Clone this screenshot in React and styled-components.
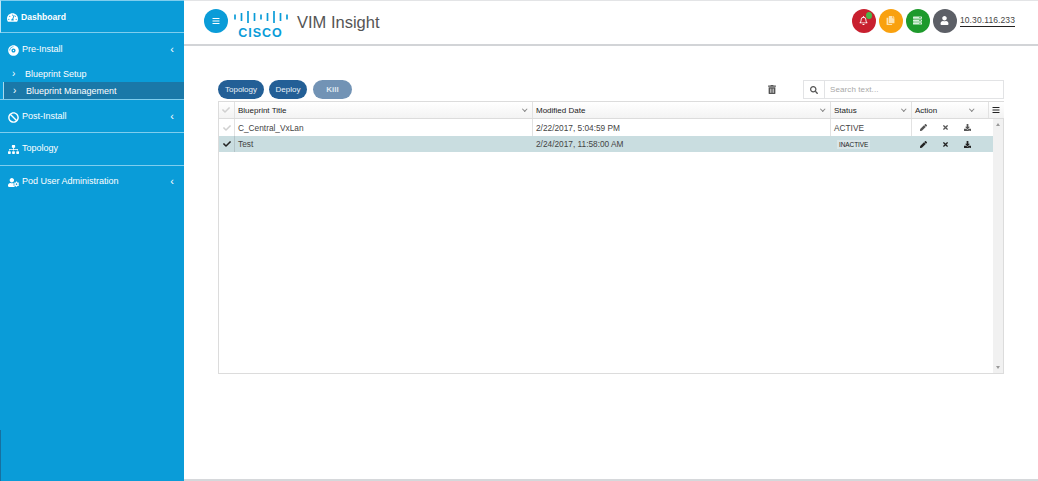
import React from "react";
import styled, { createGlobalStyle } from "styled-components";
import {
  FaRegBell,
  FaCheck,
  FaTimes,
  FaPen,
  FaDownload,
  FaUser,
  FaTrashAlt,
  FaSearch,
  FaBars,
  FaSitemap,
  FaTachometerAlt,
  FaCopy,
  FaServer,
  FaBan,
  FaUserCog,
  FaCompactDisc,
} from "react-icons/fa";

const GlobalStyle = createGlobalStyle`
  html, body {
    margin: 0;
    padding: 0;
    background: #fff;
    overflow: hidden;
  }
  * { box-sizing: border-box; }
  body {
    font-family: "Liberation Sans", Arial, sans-serif;
    color: #444;
  }
`;

const Page = styled.div`
  display: flex;
  width: 1038px;
  height: 481px;
  border-bottom: 2px solid #d6d8db;
`;

const Sidebar = styled.nav`
  position: relative;
  width: 184px;
  flex: none;
  background: #0a9cd8;
  margin-bottom: -2px;
  height: 481px;
  color: #fff;
  font-size: 9px;

  &::before {
    content: "";
    position: absolute;
    left: 0;
    top: 430px;
    bottom: 0;
    width: 1px;
    background: #17709f;
  }
`;

const Section = styled.div`
  height: ${(p) => p.$h}px;
  border-bottom: 1px solid #7fcdee;
  padding-left: 1px;
`;

const DashboardSection = styled(Section)`
  border-top: 1px solid #7fcdee;
  border-left: 1px solid #bfe5f5;
  padding-left: 6px;
`;

const SectionHead = styled.div`
  display: flex;
  align-items: center;
  height: ${(p) => p.$h}px;
  padding: 0 10px ${(p) => (p.$lift ? 2 : 0)}px ${(p) => p.$left ?? 7}px;
  font-weight: ${(p) => (p.$bold ? 700 : 400)};
  font-size: ${(p) => (p.$bold ? 8.6 : 9)}px;

  svg {
    flex: none;
    width: 11px;
    height: 11px;
    margin: 2px 3px 0 0;
  }
`;

const Caret = styled.span`
  margin-left: auto;
  font-size: 11px;
  line-height: 1;
`;

const SubItem = styled.div`
  display: flex;
  align-items: center;
  height: 17px;
  padding-left: ${(p) => (p.$active ? 9 : 11)}px;
  margin-left: ${(p) => (p.$active ? 2 : 0)}px;
  background: ${(p) => (p.$active ? "#1a78a8" : "transparent")};
  border-left: ${(p) => (p.$active ? "1px solid #a9d9ee" : "none")};
  font-size: 9px;
`;

const SubCaret = styled.span`
  width: 13px;
  font-size: 10px;
`;

const Main = styled.main`
  flex: 1;
  min-width: 0;
`;

const Header = styled.header`
  display: flex;
  align-items: center;
  height: 46px;
  padding: 0 23px 4px 20px;
  border-top: 1px solid #e3e4e6;
  border-bottom: 2px solid #d2d4d7;
`;

const MenuButton = styled.div`
  display: flex;
  align-items: center;
  justify-content: center;
  width: 24px;
  height: 24px;
  border-radius: 50%;
  background: #0a9cd8;
  color: #fff;

  svg {
    width: 8px;
    height: 8px;
  }
`;

const Logo = styled.div`
  display: flex;
  flex-direction: column;
  align-items: center;
  gap: 5px;
  margin: 7px 0 0 5px;
  width: 55px;
  color: #0a9cd8;
`;

const LogoWord = styled.span`
  font-size: 12.5px;
  line-height: 10px;
  font-weight: 700;
  letter-spacing: 1px;
`;

const AppTitle = styled.h1`
  margin: 3px 0 0 9px;
  font-size: 16.5px;
  font-weight: 400;
  color: #555;
`;

const StatusIcons = styled.div`
  display: flex;
  align-items: center;
  gap: 3px;
  margin-left: auto;
`;

const StatusDot = styled.div`
  position: relative;
  display: flex;
  align-items: center;
  justify-content: center;
  width: 24px;
  height: 24px;
  border-radius: 50%;
  background: ${(p) => p.$color};
  color: ${(p) => p.$ink || "#fff"};

  svg {
    width: 9px;
    height: 9px;
  }
`;

const Badge = styled.span`
  position: absolute;
  top: 3px;
  right: 4px;
  width: 6px;
  height: 7px;
  border-radius: 50%;
  background: #49b649;
`;

const HostLink = styled.span`
  padding-bottom: 1px;
  font-size: 8.5px;
  letter-spacing: 0.1px;
  color: #444;
  border-bottom: 1px solid #222;
`;

const Content = styled.section`
  padding: 34px 34px 0 34px;
`;

const Toolbar = styled.div`
  display: flex;
  align-items: center;
  height: 19px;
  margin-bottom: 2px;
`;

const PillButton = styled.div`
  display: flex;
  align-items: center;
  justify-content: center;
  width: ${(p) => p.$w}px;
  height: 19px;
  margin-right: ${(p) => p.$gap}px;
  border-radius: 10px;
  background: ${(p) => (p.$muted ? "#7293b5" : "#235f96")};
  color: ${(p) => (p.$muted ? "#dfe8f0" : "#e8f0f6")};
  font-size: 8px;
  font-weight: ${(p) => (p.$muted ? 700 : 400)};
`;

const TrashIcon = styled.div`
  display: flex;
  color: #555;
  margin-left: auto;
  margin-right: 27px;

  svg {
    width: 8px;
    height: 9px;
  }
`;

const SearchBox = styled.div`
  display: flex;
  width: 201px;
  height: 19px;
  border: 1px solid #e2e3e5;
`;

const SearchAddon = styled.div`
  display: flex;
  align-items: center;
  justify-content: center;
  width: 21px;
  border-right: 1px solid #e2e3e5;
  color: #555;

  svg {
    width: 8px;
    height: 8px;
  }
`;

const SearchText = styled.div`
  padding-left: 5px;
  font-size: 8px;
  line-height: 17px;
  color: #a8a8a8;
  letter-spacing: 0.1px;
`;

const GridFrame = styled.div`
  position: relative;
  width: 786px;
  height: 273px;
  border: 1px solid #dcdcdc;
`;

const Row = styled.div`
  display: grid;
  grid-template-columns: 16px 298px 298px 81px 77px ${(p) => (p.$head ? "15px" : "")};
  height: ${(p) => p.$h}px;
  width: ${(p) => (p.$head ? 785 : 775)}px;
  background: ${(p) => p.$bg || "transparent"};
  border-bottom: ${(p) => (p.$head ? "1px solid #dcdcdc" : "none")};
  color: #444;
  font-size: 8.3px;
`;

const Cell = styled.div`
  display: flex;
  align-items: center;
  justify-content: ${(p) => (p.$center ? "center" : "flex-start")};
  padding: ${(p) => (p.$center ? "0" : "0 3px")};
  border-right: ${(p) => (p.$noLine ? "none" : "1px solid #e2e2e2")};
  border-color: ${(p) => (p.$tint ? "#b4c4c8" : "#e2e2e2")};
`;

const HeadCell = styled(Cell)`
  justify-content: space-between;
  padding: 0 ${(p) => p.$right ?? 6}px 0 3px;
  color: #222;
  font-size: 8px;
  background: linear-gradient(#fff, #f3f3f3);
`;

const MenuCell = styled(HeadCell)`
  padding: 0 0 0 3px;

  svg {
    width: 8px;
    height: 8px;
  }
`;

const Chevron = styled.span`
  width: 3.5px;
  height: 3.5px;
  margin-top: -3px;
  border-right: 1px solid #888;
  border-bottom: 1px solid #888;
  transform: rotate(45deg);
`;

const CheckMark = styled.div`
  display: flex;
  color: ${(p) => (p.$on ? "#222" : "#d0d0d0")};

  svg {
    width: 8px;
    height: 8px;
  }
`;

const InactiveTag = styled.span`
  margin-left: 3px;
  font-size: 6.5px;
  color: #222;
  background: #d9e6e8;
  padding: 1px 2px;
  letter-spacing: -0.1px;
`;

const ActionCell = styled(Cell)`
  padding: 0 0 0 8px;
  gap: 15px;
  color: ${(p) => (p.$dark ? "#222" : "#555")};

  svg {
    width: 7px;
    height: 7px;
  }
`;

const Scrollbar = styled.div`
  position: absolute;
  top: 17px;
  right: 0;
  bottom: 0;
  width: 10px;
  display: flex;
  flex-direction: column;
  justify-content: space-between;
  align-items: center;
  padding: 4px 0;
  background: #f1f1f1;
`;

const ScrollArrow = styled.span`
  width: 0;
  height: 0;
  border-left: 2px solid transparent;
  border-right: 2px solid transparent;
  border-${(p) => (p.$up ? "bottom" : "top")}: 3px solid #999;
`;

const barHeights = [5, 8, 12, 8, 5, 8, 12, 8, 5];

const CiscoBars = () => (
  <svg width="54" height="12" viewBox="0 0 54 12" fill="none" stroke="currentColor" strokeWidth="1.7">
    {barHeights.map((h, i) => (
      <line key={i} x1={1 + i * 6.5} x2={1 + i * 6.5} y1={6 - h / 2} y2={6 + h / 2} />
    ))}
  </svg>
);

const rows = [
  { title: "C_Central_VxLan", date: "2/22/2017, 5:04:59 PM", status: "ACTIVE" },
  { title: "Test", date: "2/24/2017, 11:58:00 AM", status: "INACTIVE", selected: true },
];

const columns = [
  { label: "Blueprint Title" },
  { label: "Modified Date" },
  { label: "Status" },
  { label: "Action", right: 15 },
];

export default function App() {
  return (
    <>
      <GlobalStyle />
      <Page>
        <Sidebar>
          <DashboardSection $h={33}>
            <SectionHead $h={31} $bold $left={0}>
              <FaTachometerAlt />
              Dashboard
            </SectionHead>
          </DashboardSection>
          <Section $h={67}>
            <SectionHead $h={32}>
              <FaCompactDisc />
              Pre-Install
              <Caret>‹</Caret>
            </SectionHead>
            <SubItem>
              <SubCaret>›</SubCaret>
              Blueprint Setup
            </SubItem>
            <SubItem $active>
              <SubCaret>›</SubCaret>
              Blueprint Management
            </SubItem>
          </Section>
          <Section $h={33}>
            <SectionHead $h={32}>
              <FaBan />
              Post-Install
              <Caret>‹</Caret>
            </SectionHead>
          </Section>
          <Section $h={33}>
            <SectionHead $h={32} $lift>
              <FaSitemap />
              Topology
            </SectionHead>
          </Section>
          <SectionHead $h={32} $left={8} $lift>
            <FaUserCog />
            Pod User Administration
            <Caret>‹</Caret>
          </SectionHead>
        </Sidebar>
        <Main>
          <Header>
            <MenuButton>
              <FaBars />
            </MenuButton>
            <Logo>
              <CiscoBars />
              <LogoWord>CISCO</LogoWord>
            </Logo>
            <AppTitle>VIM Insight</AppTitle>
            <StatusIcons>
              <StatusDot $color="#c8202f">
                <FaRegBell />
                <Badge />
              </StatusDot>
              <StatusDot $color="#f9a10f" $ink="#fde3b0">
                <FaCopy />
              </StatusDot>
              <StatusDot $color="#1e9a2c" $ink="#d9f0dc">
                <FaServer />
              </StatusDot>
              <StatusDot $color="#5c5f66">
                <FaUser />
              </StatusDot>
              <HostLink>10.30.116.233</HostLink>
            </StatusIcons>
          </Header>
          <Content>
            <Toolbar>
              <PillButton $w={46} $gap={5}>Topology</PillButton>
              <PillButton $w={38} $gap={6}>Deploy</PillButton>
              <PillButton $w={39} $gap={0} $muted>
                Kill
              </PillButton>
              <TrashIcon>
                <FaTrashAlt />
              </TrashIcon>
              <SearchBox>
                <SearchAddon>
                  <FaSearch />
                </SearchAddon>
                <SearchText>Search text...</SearchText>
              </SearchBox>
            </Toolbar>
            <GridFrame>
              <Row $head $h={17}>
                <HeadCell>
                  <CheckMark>
                    <FaCheck />
                  </CheckMark>
                </HeadCell>
                {columns.map((c) => (
                  <HeadCell key={c.label} $right={c.right}>
                    {c.label}
                    <Chevron />
                  </HeadCell>
                ))}
                <MenuCell $noLine>
                  <FaBars />
                </MenuCell>
              </Row>
              {rows.map((r) => (
                <Row key={r.title} $h={r.selected ? 16 : 17} $bg={r.selected ? "#c9dde0" : undefined}>
                  <Cell $center $tint={r.selected}>
                    <CheckMark $on={r.selected}>
                      <FaCheck />
                    </CheckMark>
                  </Cell>
                  <Cell $noLine={r.selected}>{r.title}</Cell>
                  <Cell $noLine={r.selected}>{r.date}</Cell>
                  <Cell $noLine={r.selected}>
                    {r.selected ? <InactiveTag>{r.status}</InactiveTag> : r.status}
                  </Cell>
                  <ActionCell $noLine $dark={r.selected}>
                    <FaPen />
                    <FaTimes />
                    <FaDownload />
                  </ActionCell>
                </Row>
              ))}
              <Scrollbar>
                <ScrollArrow $up />
                <ScrollArrow />
              </Scrollbar>
            </GridFrame>
          </Content>
        </Main>
      </Page>
    </>
  );
}
